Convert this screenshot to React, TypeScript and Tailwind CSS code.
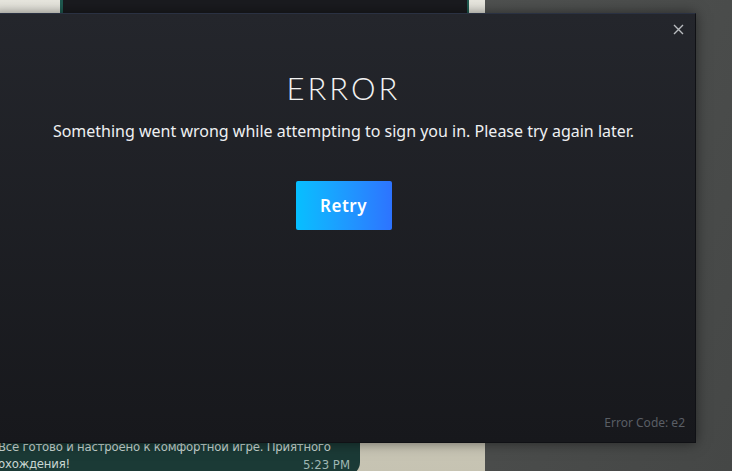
import React from "react";

export default function App() {
  return (
    <div className="relative w-[732px] h-[471px] overflow-hidden bg-[#4b4d4c]" style={{ fontFamily: '"Noto Sans", "Open Sans", sans-serif' }}>
      {/* background desktop */}
      <div className="flex w-full h-full">
        <div className="relative w-[485px] h-full bg-gradient-to-b from-[#e8e7df] to-[#c6c3b2]">
          {/* dark window at top */}
          <div className="ml-[60px] w-[409px] h-[40px] bg-[#1a1b1f] border-l-[3px] border-r-[2px] border-[#1f5a50]" />
        </div>
        <div className="flex-1 h-full bg-gradient-to-br from-[#4f5150] to-[#454746]" />
      </div>

      {/* chat bubble */}
      <div className="absolute left-0 top-[436px] w-[360px] h-[40px] bg-[#1b3a36] rounded-br-[14px] text-[13px] leading-[17px] text-[#c9d6d2]" style={{ fontFamily: '"DejaVu Sans Condensed", "Liberation Sans Narrow", "Noto Sans", sans-serif' }}>
        <div className="pt-[2px] -ml-[2px] whitespace-nowrap tracking-[-0.2px]">Все готово и настроено к комфортной игре. Приятного</div>
        <div className="flex justify-between pr-[10px] -ml-[2px]">
          <span className="tracking-[-0.2px]">охождения!</span>
          <span className="text-[#9fb7b3] mt-[1px]">5:23 PM</span>
        </div>
      </div>

      {/* modal */}
      <div className="absolute left-[-9px] top-[13px] w-[705px] h-[430px] bg-gradient-to-b from-[#24262c] to-[#17181c] border border-[#101115] border-t-[#2a3142] shadow-[0_0_12px_rgba(0,0,0,0.5)] flex flex-col items-center">
        <button className="absolute right-[10px] top-[8px] w-[14px] h-[14px] flex items-center justify-center text-[#b9bcc0]">
          <svg width="11" height="11" viewBox="0 0 11 11" fill="none" stroke="currentColor" strokeWidth="1.4">
            <path d="M1 1L10 10M10 1L1 10" />
          </svg>
        </button>
        <div className="mt-[54px] text-[31px] leading-[40px] font-light tracking-[3px] text-[#f2f2f2]" style={{ fontFamily: '"Lato", "Open Sans", sans-serif' }}>
          ERROR
        </div>
        <div className="mt-[12px] text-[16px] leading-[22px] text-[#eef0f2] whitespace-nowrap">
          Something went wrong while attempting to sign you in. Please try again later.
        </div>
        <button className="mt-[39px] w-[96px] h-[49px] rounded-[2px] bg-gradient-to-r from-[#06bfff] to-[#2d73ff] text-white text-[17px] font-semibold tracking-[0.5px]">
          Retry
        </button>
        <div className="mt-auto mb-[10px] self-end mr-[10px] text-[12px] text-[#5a5e65]">Error Code: e2</div>
      </div>
    </div>
  );
}
